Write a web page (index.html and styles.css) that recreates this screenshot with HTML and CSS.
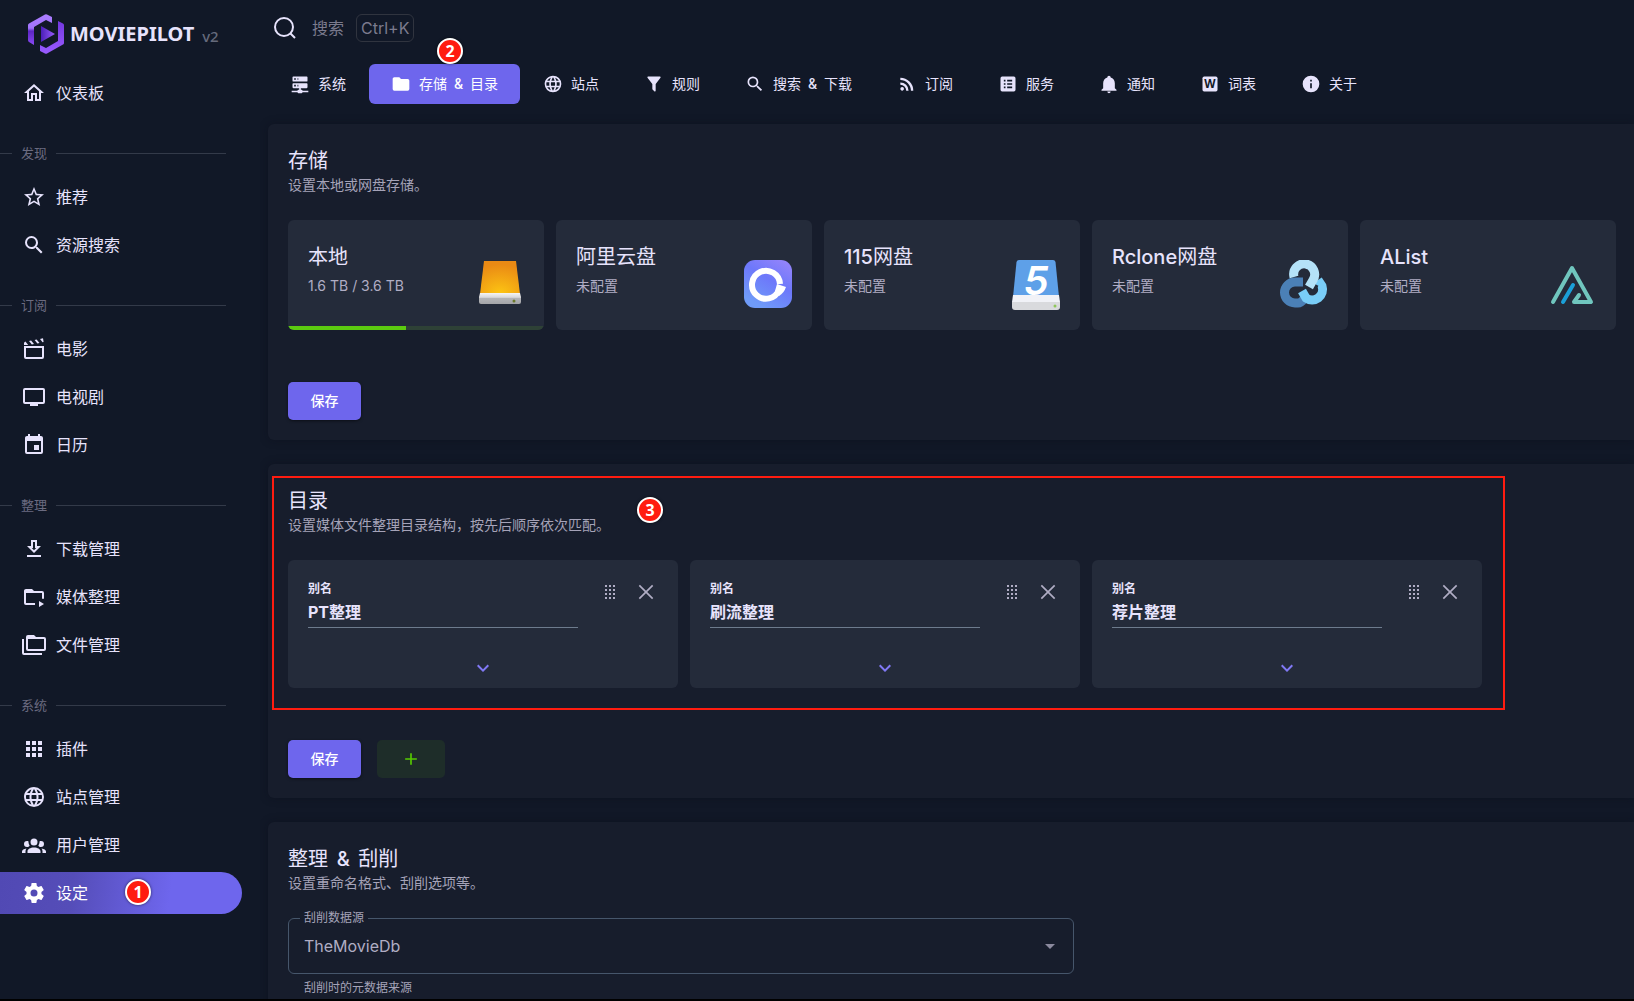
FILE: index.html
```html
<!DOCTYPE html>
<html lang="zh-CN">
<head>
  <meta charset="UTF-8">
  <meta name="viewport" content="width=device-width, initial-scale=1.0">
  <title>MoviePilot</title>
  <link rel="stylesheet" href="styles.css">
</head>
<body>
  <!-- icon sprite -->
  <svg class="sprite" aria-hidden="true">
    <symbol id="i-home" viewBox="0 0 24 24"><path d="M12 5.69L17 10.19V18H15V12H9V18H7V10.19L12 5.69M12 3L2 12H5V20H11V14H13V20H19V12H22"/></symbol>
    <symbol id="i-star" viewBox="0 0 24 24"><path d="M12,15.39L8.24,17.66L9.23,13.38L5.91,10.5L10.29,10.13L12,6.09L13.71,10.13L18.09,10.5L14.77,13.38L15.76,17.66M22,9.24L14.81,8.63L12,2L9.19,8.63L2,9.24L7.45,13.97L5.82,21L12,17.27L18.18,21L16.54,13.97L22,9.24Z"/></symbol>
    <symbol id="i-search" viewBox="0 0 24 24"><path d="M9.5,3A6.5,6.5 0 0,1 16,9.5C16,11.11 15.41,12.59 14.44,13.73L14.71,14H15.5L20.5,19L19,20.5L14,15.5V14.71L13.73,14.44C12.59,15.41 11.11,16 9.5,16A6.5,6.5 0 0,1 3,9.5A6.5,6.5 0 0,1 9.5,3M9.5,5C7,5 5,7 5,9.5C5,12 7,14 9.5,14C12,14 14,12 14,9.5C14,7 12,5 9.5,5Z"/></symbol>
    <symbol id="i-movie" viewBox="0 0 24 24"><path fill-rule="evenodd" d="M2 9H22V20A2 2 0 0 1 20 22H4A2 2 0 0 1 2 20V9M4 11V20H20V11H4Z"/><path d="M2 8V6.3A2 2 0 0 1 3.4 4.5L6.2 8ZM7 3.9L9.1 3.4L12 7L9.8 7.5ZM12.6 2.9L14.6 2.4L17.5 6L15.4 6.5ZM18 2L21 1.3L21.6 5L20.6 5.2Z"/></symbol>
    <symbol id="i-tv" viewBox="0 0 24 24"><path d="M21,17H3V5H21M21,3H3A2,2 0 0,0 1,5V17A2,2 0 0,0 3,19H8V21H16V19H21A2,2 0 0,0 23,17V5A2,2 0 0,0 21,3Z"/></symbol>
    <symbol id="i-calendar" viewBox="0 0 24 24"><path d="M19,19H5V8H19M16,1V3H8V1H6V3H5C3.89,3 3,3.89 3,5V19A2,2 0 0,0 5,21H19A2,2 0 0,0 21,19V5C21,3.89 20.1,3 19,3H18V1M17,12H12V17H17V12Z"/></symbol>
    <symbol id="i-download" viewBox="0 0 24 24"><path d="M13,5V11H14.17L12,13.17L9.83,11H11V5H13M15,3H9V9H5L12,16L19,9H15V3M19,18H5V20H19V18Z"/></symbol>
    <symbol id="i-folder-play" viewBox="0 0 24 24"><path d="M13 19C13 19.34 13.04 19.67 13.09 20H4A2 2 0 0 1 2 18V6C2 4.89 2.89 4 4 4H10L12 6H20A2 2 0 0 1 22 8V13.8H20V8H4V18H13.09C13.04 18.33 13 18.66 13 19M17 16V22L22 19Z"/></symbol>
    <symbol id="i-folders" viewBox="0 0 24 24"><path d="M22,4H14L12,2H6A2,2 0 0,0 4,4V16A2,2 0 0,0 6,18H22A2,2 0 0,0 24,16V6A2,2 0 0,0 22,4M2,6H0V20A2,2 0 0,0 2,22H20V20H2V6M6,6H22V16H6V6Z"/></symbol>
    <symbol id="i-apps" viewBox="0 0 24 24"><path d="M16,20H20V16H16M16,14H20V10H16M10,8H14V4H10M16,8H20V4H16M10,14H14V10H10M4,14H8V10H4M4,20H8V16H4M10,20H14V16H10M4,8H8V4H4V8Z"/></symbol>
    <symbol id="i-web" viewBox="0 0 24 24"><path d="M16.36,14C16.44,13.34 16.5,12.68 16.5,12C16.5,11.32 16.44,10.66 16.36,10H19.74C19.9,10.64 20,11.31 20,12C20,12.69 19.9,13.36 19.74,14M14.59,19.56C15.19,18.45 15.65,17.25 15.97,16H18.92C17.96,17.65 16.43,18.93 14.59,19.56M14.34,14H9.66C9.56,13.34 9.5,12.68 9.5,12C9.5,11.32 9.56,10.65 9.66,10H14.34C14.43,10.65 14.5,11.32 14.5,12C14.5,12.68 14.43,13.34 14.34,14M12,19.96C11.17,18.76 10.5,17.43 10.09,16H13.91C13.5,17.43 12.83,18.76 12,19.96M8,8H5.08C6.03,6.34 7.57,5.06 9.4,4.44C8.8,5.55 8.35,6.75 8,8M5.08,16H8C8.35,17.25 8.8,18.45 9.4,19.56C7.57,18.93 6.03,17.65 5.08,16M4.26,14C4.1,13.36 4,12.69 4,12C4,11.31 4.1,10.64 4.26,10H7.64C7.56,10.66 7.5,11.32 7.5,12C7.5,12.68 7.56,13.34 7.64,14M12,4.03C12.83,5.23 13.5,6.57 13.91,8H10.09C10.5,6.57 11.17,5.23 12,4.03M18.92,8H15.97C15.65,6.75 15.19,5.55 14.59,4.44C16.43,5.07 17.96,6.34 18.92,8M12,2C6.47,2 2,6.5 2,12A10,10 0 0,0 12,22A10,10 0 0,0 22,12A10,10 0 0,0 12,2Z"/></symbol>
    <symbol id="i-users" viewBox="0 0 24 24"><path d="M12,5.5A3.5,3.5 0 0,1 15.5,9A3.5,3.5 0 0,1 12,12.5A3.5,3.5 0 0,1 8.5,9A3.5,3.5 0 0,1 12,5.5M5,8C5.56,8 6.08,8.15 6.53,8.42C6.38,9.85 6.8,11.27 7.66,12.38C7.16,13.34 6.16,14 5,14A3,3 0 0,1 2,11A3,3 0 0,1 5,8M19,8A3,3 0 0,1 22,11A3,3 0 0,1 19,14C17.84,14 16.84,13.34 16.34,12.38C17.2,11.27 17.62,9.85 17.47,8.42C17.92,8.15 18.44,8 19,8M5.5,18.25C5.5,16.18 8.41,14.5 12,14.5C15.59,14.5 18.5,16.18 18.5,18.25V20H5.5V18.25M0,20V18.5C0,17.11 1.89,15.94 4.45,15.6C3.86,16.28 3.5,17.22 3.5,18.25V20H0M24,20H20.5V18.25C20.5,17.22 20.14,16.28 19.55,15.6C22.11,15.94 24,17.11 24,18.5V20Z"/></symbol>
    <symbol id="i-cog" viewBox="0 0 24 24"><path d="M12,15.5A3.5,3.5 0 0,1 8.5,12A3.5,3.5 0 0,1 12,8.5A3.5,3.5 0 0,1 15.5,12A3.5,3.5 0 0,1 12,15.5M19.43,12.97C19.47,12.65 19.5,12.33 19.5,12C19.5,11.67 19.47,11.34 19.43,11L21.54,9.37C21.73,9.22 21.78,8.95 21.66,8.73L19.66,5.27C19.54,5.05 19.27,4.96 19.05,5.05L16.56,6.05C16.04,5.66 15.5,5.32 14.87,5.07L14.5,2.42C14.46,2.18 14.25,2 14,2H10C9.75,2 9.54,2.18 9.5,2.42L9.13,5.07C8.5,5.32 7.96,5.66 7.44,6.05L4.95,5.05C4.73,4.96 4.46,5.05 4.34,5.27L2.34,8.73C2.21,8.95 2.27,9.22 2.46,9.37L4.57,11C4.53,11.34 4.5,11.67 4.5,12C4.5,12.33 4.53,12.65 4.57,12.97L2.46,14.63C2.27,14.78 2.21,15.05 2.34,15.27L4.34,18.73C4.46,18.95 4.73,19.03 4.95,18.95L7.44,17.94C7.96,18.34 8.5,18.68 9.13,18.93L9.5,21.58C9.54,21.82 9.75,22 10,22H14C14.25,22 14.46,21.82 14.5,21.58L14.87,18.93C15.5,18.67 16.04,18.34 16.56,17.94L19.05,18.95C19.27,19.03 19.54,18.95 19.66,18.73L21.66,15.27C21.78,15.05 21.73,14.78 21.54,14.63L19.43,12.97Z"/></symbol>
    <symbol id="i-server" viewBox="0 0 24 24"><path d="M13,19H14A1,1 0 0,1 15,20H22V22H15A1,1 0 0,1 14,23H10A1,1 0 0,1 9,22H2V20H9A1,1 0 0,1 10,19H11V17H4A1,1 0 0,1 3,16V12A1,1 0 0,1 4,11H20A1,1 0 0,1 21,12V16A1,1 0 0,1 20,17H13V19M4,3H20A1,1 0 0,1 21,4V8A1,1 0 0,1 20,9H4A1,1 0 0,1 3,8V4A1,1 0 0,1 4,3M9,7H10V5H9V7M9,15H10V13H9V15M5,5V7H7V5H5M5,13V15H7V13H5Z"/></symbol>
    <symbol id="i-folder" viewBox="0 0 24 24"><path d="M10,4H4C2.89,4 2,4.89 2,6V18A2,2 0 0,0 4,20H20A2,2 0 0,0 22,18V8C22,6.89 21.1,6 20,6H12L10,4Z"/></symbol>
    <symbol id="i-filter" viewBox="0 0 24 24"><path d="M14,12V19.88C14.04,20.18 13.94,20.5 13.71,20.71C13.32,21.1 12.69,21.1 12.3,20.71L10.29,18.7C10.06,18.47 9.96,18.16 10,17.87V12H9.97L4.21,4.62C3.87,4.19 3.95,3.56 4.38,3.22C4.57,3.08 4.78,3 5,3H19C19.22,3 19.43,3.08 19.62,3.22C20.05,3.56 20.13,4.19 19.79,4.62L14.03,12H14Z"/></symbol>
    <symbol id="i-rss" viewBox="0 0 24 24"><path d="M6.18,15.64A2.18,2.18 0 0,1 8.36,17.82C8.36,19 7.38,20 6.18,20C5,20 4,19 4,17.82A2.18,2.18 0 0,1 6.18,15.64M4,4.44A15.56,15.56 0 0,1 19.56,20H16.73A12.73,12.73 0 0,0 4,7.27V4.44M4,10.1A9.9,9.9 0 0,1 13.9,20H11.07A7.07,7.07 0 0,0 4,12.93V10.1Z"/></symbol>
    <symbol id="i-list" viewBox="0 0 24 24"><path fill-rule="evenodd" d="M5 3H19A2 2 0 0 1 21 5V19A2 2 0 0 1 19 21H5A2 2 0 0 1 3 19V5A2 2 0 0 1 5 3M7 7V9H9V7ZM11 7V9H17V7ZM7 11V13H9V11ZM11 11V13H17V11ZM7 15V17H9V15ZM11 15V17H17V15Z"/></symbol>
    <symbol id="i-bell" viewBox="0 0 24 24"><path d="M21,19V20H3V19L5,17V11C5,7.9 7.03,5.17 10,4.29C10,4.19 10,4.1 10,4A2,2 0 0,1 12,2A2,2 0 0,1 14,4C14,4.1 14,4.19 14,4.29C16.97,5.17 19,7.9 19,11V17L21,19M14,21A2,2 0 0,1 12,23A2,2 0 0,1 10,21"/></symbol>
    <symbol id="i-info" viewBox="0 0 24 24"><path d="M13,9H11V7H13M13,17H11V11H13M12,2A10,10 0 0,0 2,12A10,10 0 0,0 12,22A10,10 0 0,0 22,12A10,10 0 0,0 12,2Z"/></symbol>
    <symbol id="i-drag" viewBox="0 0 20 20"><path d="M5 3H7V5H5ZM9 3H11V5H9ZM13 3H15V5H13ZM5 7H7V9H5ZM9 7H11V9H9ZM13 7H15V9H13ZM5 11H7V13H5ZM9 11H11V13H9ZM13 11H15V13H13ZM5 15H7V17H5ZM9 15H11V17H9ZM13 15H15V17H13Z"/></symbol>
    <symbol id="i-close" viewBox="0 0 24 24"><path d="M4 4L20 20M20 4L4 20" fill="none" stroke="currentColor" stroke-width="2"/></symbol>
    <symbol id="i-chevron" viewBox="0 0 24 24"><path d="M7.41,8.58L12,13.17L16.59,8.58L18,10L12,16L6,10L7.41,8.58Z"/></symbol>
    <symbol id="i-plus" viewBox="0 0 24 24"><path d="M19,13H13V19H11V13H5V11H11V5H13V11H19V13Z"/></symbol>
  </svg>

  <div class="layout">
    <aside class="sidebar">
      <a class="brand" href="#">
        <svg class="brand-logo" viewBox="0 0 36 40" aria-hidden="true">
          <defs>
            <linearGradient id="lg1" x1="0" y1="0" x2="0" y2="1"><stop offset="0" stop-color="#ab7dff"/><stop offset="0.450" stop-color="#a274fb"/><stop offset="0.550" stop-color="#5c25c4"/><stop offset="1" stop-color="#8a4af5"/></linearGradient>
            <linearGradient id="lg2" x1="0" y1="0" x2="0" y2="1"><stop offset="0" stop-color="#7337e0"/><stop offset="1" stop-color="#9a5cff"/></linearGradient>
            <linearGradient id="lg3" x1="0" y1="0" x2="1" y2="0"><stop offset="0" stop-color="#4a1fb8"/><stop offset="1" stop-color="#9a5cff"/></linearGradient>
          </defs>
          <path fill="url(#lg1)" d="M0 11Q0 10 1 9.400L17 0.400Q18 0 19 0.400L24 3V9L18 6L6 13V31L1 28Q0 27.500 0 26Z"/>
          <path fill="url(#lg2)" d="M30 7L35 9.500Q36 10 36 11V29Q36 30 35 30.500L19 39.600Q18 40 17 39.600L12 37V31L18 34L30 27Z"/>
          <path fill="url(#lg3)" d="M13 12L27 20L13 28Z"/>
        </svg>
        <span class="brand-name">MOVIEPILOT</span>
        <span class="brand-version">v2</span>
      </a>
      <nav class="nav">
        <a class="nav-link" href="#"><svg class="icon"><use href="#i-home"/></svg>仪表板</a>
        <div class="nav-title">发现</div>
        <a class="nav-link" href="#"><svg class="icon"><use href="#i-star"/></svg>推荐</a>
        <a class="nav-link" href="#"><svg class="icon"><use href="#i-search"/></svg>资源搜索</a>
        <div class="nav-title">订阅</div>
        <a class="nav-link" href="#"><svg class="icon"><use href="#i-movie"/></svg>电影</a>
        <a class="nav-link" href="#"><svg class="icon"><use href="#i-tv"/></svg>电视剧</a>
        <a class="nav-link" href="#"><svg class="icon"><use href="#i-calendar"/></svg>日历</a>
        <div class="nav-title">整理</div>
        <a class="nav-link" href="#"><svg class="icon"><use href="#i-download"/></svg>下载管理</a>
        <a class="nav-link" href="#"><svg class="icon"><use href="#i-folder-play"/></svg>媒体整理</a>
        <a class="nav-link" href="#"><svg class="icon"><use href="#i-folders"/></svg>文件管理</a>
        <div class="nav-title">系统</div>
        <a class="nav-link" href="#"><svg class="icon"><use href="#i-apps"/></svg>插件</a>
        <a class="nav-link" href="#"><svg class="icon"><use href="#i-web"/></svg>站点管理</a>
        <a class="nav-link" href="#"><svg class="icon"><use href="#i-users"/></svg>用户管理</a>
        <a class="nav-link active" href="#"><svg class="icon"><use href="#i-cog"/></svg>设定<span class="step step-nav">1</span></a>
      </nav>
    </aside>

    <main class="main">
      <header class="topbar">
        <button class="search-btn" type="button">
          <svg class="icon" viewBox="0 0 24 24" fill="none" stroke="currentColor" stroke-width="2"><circle cx="11" cy="11" r="9"/><path d="M17.500 17.500L22 22"/></svg>
          <span>搜索</span>
          <kbd>Ctrl+K</kbd>
        </button>
      </header>

      <nav class="tabs">
        <button class="tab" type="button"><svg class="icon"><use href="#i-server"/></svg>系统</button>
        <button class="tab active" type="button"><svg class="icon"><use href="#i-folder"/></svg><span>存储 <span class="amp">&amp;</span> 目录</span><span class="step step-tab">2</span></button>
        <button class="tab" type="button"><svg class="icon"><use href="#i-web"/></svg>站点</button>
        <button class="tab" type="button"><svg class="icon"><use href="#i-filter"/></svg>规则</button>
        <button class="tab" type="button"><svg class="icon"><use href="#i-search"/></svg><span>搜索 <span class="amp">&amp;</span> 下载</span></button>
        <button class="tab" type="button"><svg class="icon"><use href="#i-rss"/></svg>订阅</button>
        <button class="tab" type="button"><svg class="icon"><use href="#i-list"/></svg>服务</button>
        <button class="tab" type="button"><svg class="icon"><use href="#i-bell"/></svg>通知</button>
        <button class="tab" type="button"><svg class="icon" viewBox="0 0 24 24"><rect x="3" y="3" width="18" height="18" rx="2"/><text x="12" y="17" text-anchor="middle" class="word-mark">W</text></svg>词表</button>
        <button class="tab" type="button"><svg class="icon"><use href="#i-info"/></svg>关于</button>
      </nav>

      <section class="card">
        <h2>存储</h2>
        <p class="subtitle">设置本地或网盘存储。</p>
        <div class="storage-grid">
          <div class="storage">
            <div>
              <h3>本地</h3>
              <p>1.6 TB / 3.6 TB</p>
            </div>
            <svg class="storage-icon" viewBox="0 0 48 48" aria-hidden="true">
              <defs>
                <radialGradient id="orange" cx="0.5" cy="1" r="0.9"><stop offset="0" stop-color="#fdc613"/><stop offset="1" stop-color="#ea8a14"/></radialGradient>
                <linearGradient id="steel" x1="0" y1="0" x2="0" y2="1"><stop offset="0" stop-color="#f4f4f4"/><stop offset="0.400" stop-color="#d8d8da"/><stop offset="0.450" stop-color="#b4b5b8"/><stop offset="1" stop-color="#a4a5a8"/></linearGradient>
              </defs>
              <path fill="url(#orange)" d="M8 1H40L44 34H4Z"/>
              <path fill="url(#steel)" d="M4 33H44L45 37V42Q45 44 43 44H5Q3 44 3 42V37Z"/>
              <circle cx="38" cy="41" r="1.500" fill="#6c7a2c"/>
            </svg>
            <div class="usage"><div class="usage-bar" style="width: 46%"></div></div>
          </div>
          <div class="storage">
            <div>
              <h3>阿里云盘</h3>
              <p>未配置</p>
            </div>
            <svg class="storage-icon" viewBox="0 0 48 48" aria-hidden="true">
              <defs>
                <linearGradient id="ali" x1="1" y1="0" x2="0.4" y2="1"><stop offset="0" stop-color="#9a86fb"/><stop offset="0.500" stop-color="#6d78fa"/><stop offset="1" stop-color="#6f9bf8"/></linearGradient>
              </defs>
              <rect width="48" height="48" rx="11" fill="url(#ali)"/>
              <path d="M35 30A14 14 0 1 1 36 24" fill="none" stroke="#fff" stroke-width="6"/>
              <path d="M33 24L42 27Q40 33 35 36L31 31Z" fill="#fff"/>
            </svg>
          </div>
          <div class="storage">
            <div>
              <h3><span class="latin">115</span>网盘</h3>
              <p>未配置</p>
            </div>
            <svg class="storage-icon tall" viewBox="0 0 48 50" aria-hidden="true">
              <path fill="#5ea0e8" d="M7 0H41Q43 0 43.500 2L47 37H1L4.500 2Q5 0 7 0Z"/>
              <text x="24" y="35" text-anchor="middle" class="disk-mark">5</text>
              <path fill="#f1f2f7" d="M1 35H47L48 42H0Z"/>
              <path fill="#d9dadd" d="M0 42H48V47Q48 50 45 50H3Q0 50 0 47Z"/>
              <circle cx="43" cy="46" r="1.500" fill="#8fc75a"/>
            </svg>
          </div>
          <div class="storage">
            <div>
              <h3><span class="latin">Rclone</span>网盘</h3>
              <p>未配置</p>
            </div>
            <svg class="storage-icon" viewBox="0 0 48 48" aria-hidden="true" fill="none" stroke-width="9">
              <path stroke="#4b80b6" d="M23 22H15A10.500 10.500 0 0 0 15 43H18Q21 43 24 39"/>
              <path stroke="#79cdf7" d="M22 31L26 38A10.500 10.500 0 0 0 42 26L38 20"/>
              <path stroke="#242b3a" stroke-width="12" d="M33 23L30 29"/>
              <path stroke="#b4e2f8" d="M14 17A10.500 10.500 0 1 1 33 20L29 27"/>
            </svg>
          </div>
          <div class="storage">
            <div>
              <h3><span class="latin">AList</span></h3>
              <p>未配置</p>
            </div>
            <svg class="storage-icon" viewBox="0 0 48 48" aria-hidden="true" fill="none" stroke-width="4" stroke-linecap="round" stroke-linejoin="round">
              <path stroke="#70c6be" d="M5 42L24 8L43 42H26L31 35"/>
              <path stroke="#1ba0d8" d="M15 42L25 25"/>
            </svg>
          </div>
        </div>
        <div class="actions">
          <button class="btn" type="button">保存</button>
        </div>
      </section>

      <section class="card directory">
        <h2>目录</h2>
        <p class="subtitle">设置媒体文件整理目录结构，按先后顺序依次匹配。</p>
        <div class="directory-grid">
          <div class="dir">
            <div class="dir-head">
              <div class="field">
                <label for="alias1">别名</label>
                <input id="alias1" type="text" value="PT整理">
              </div>
              <button class="icon-btn" type="button" aria-label="拖动"><svg class="icon"><use href="#i-drag"/></svg></button>
              <button class="icon-btn" type="button" aria-label="关闭"><svg class="icon"><use href="#i-close"/></svg></button>
            </div>
            <button class="expand" type="button" aria-label="展开"><svg class="icon"><use href="#i-chevron"/></svg></button>
          </div>
          <div class="dir">
            <div class="dir-head">
              <div class="field">
                <label for="alias2">别名</label>
                <input id="alias2" type="text" value="刷流整理">
              </div>
              <button class="icon-btn" type="button" aria-label="拖动"><svg class="icon"><use href="#i-drag"/></svg></button>
              <button class="icon-btn" type="button" aria-label="关闭"><svg class="icon"><use href="#i-close"/></svg></button>
            </div>
            <button class="expand" type="button" aria-label="展开"><svg class="icon"><use href="#i-chevron"/></svg></button>
          </div>
          <div class="dir">
            <div class="dir-head">
              <div class="field">
                <label for="alias3">别名</label>
                <input id="alias3" type="text" value="荐片整理">
              </div>
              <button class="icon-btn" type="button" aria-label="拖动"><svg class="icon"><use href="#i-drag"/></svg></button>
              <button class="icon-btn" type="button" aria-label="关闭"><svg class="icon"><use href="#i-close"/></svg></button>
            </div>
            <button class="expand" type="button" aria-label="展开"><svg class="icon"><use href="#i-chevron"/></svg></button>
          </div>
        </div>
        <div class="actions">
          <button class="btn" type="button">保存</button>
          <button class="btn btn-add" type="button" aria-label="添加"><svg class="icon"><use href="#i-plus"/></svg></button>
        </div>
        <!-- guide marks drawn over the section -->
        <div class="highlight"></div>
        <span class="step step-section">3</span>
      </section>

      <section class="card">
        <h2>整理 <span class="amp">&amp;</span> 刮削</h2>
        <p class="subtitle">设置重命名格式、刮削选项等。</p>
        <div class="select-wrap">
          <fieldset class="select-field">
            <legend><label for="source">刮削数据源</label></legend>
            <select id="source">
              <option>TheMovieDb</option>
            </select>
          </fieldset>
          <p class="hint">刮削时的元数据来源</p>
        </div>
      </section>
    </main>
  </div>
</body>
</html>
```
FILE: styles.css
```css
* {
  box-sizing: border-box;
}

body {
  margin: 0;
  background: #111827;
  color: #e7e3fc;
  font-family: Inter, "Noto Sans CJK SC", sans-serif;
  font-size: 16px;
  line-height: 24px;
}

h2, h3, p {
  margin: 0;
}

a {
  color: inherit;
  text-decoration: none;
}

button, input, select {
  font: inherit;
  color: inherit;
  background: none;
  border: none;
  padding: 0;
}

button {
  cursor: pointer;
}

.sprite {
  display: none;
}

.icon {
  width: 24px;
  height: 24px;
  fill: currentColor;
  flex-shrink: 0;
}

.layout {
  display: flex;
  height: 100vh;
  overflow: hidden;
  border-bottom: 2px solid #000;
}

/* sidebar */
.sidebar {
  width: 260px;
  flex-shrink: 0;
}

.brand {
  display: flex;
  align-items: center;
  height: 68px;
  padding-left: 28px;
}

.brand-logo {
  width: 36px;
  height: 40px;
  margin-right: 6px;
}

.brand-name {
  font-family: "Noto Sans", sans-serif;
  font-size: 20px;
  font-weight: 700;
}

.brand-version {
  margin: 4px 0 0 8px;
  font-family: "Noto Sans", sans-serif;
  font-size: 15px;
  font-weight: 500;
  color: #656a7b;
}

.nav {
  display: flex;
  flex-direction: column;
  padding: 4px 18px 0 0;
}

.nav-link {
  position: relative;
  display: flex;
  align-items: center;
  gap: 10px;
  height: 42px;
  margin-bottom: 6px;
  padding-left: 22px;
  border-radius: 0 21px 21px 0;
}

.nav-link.active {
  background: linear-gradient(98deg, #5149b4, #554db8 30%, #6e66ed 70%);
  color: #fff;
}

.nav-title {
  display: flex;
  align-items: center;
  gap: 9px;
  height: 56px;
  padding: 20px 16px 10px 0;
  font-size: 13px;
  color: #6b6b80;
}

.nav-title::before,
.nav-title::after {
  content: "";
  height: 1px;
  background: #333a49;
}

.nav-title::before {
  width: 12px;
}

.nav-title::after {
  flex: 1;
}

/* numbered guide badges */
.step {
  position: absolute;
  display: flex;
  align-items: center;
  justify-content: center;
  width: 26px;
  height: 26px;
  border: 2px solid #fff;
  border-radius: 50%;
  background: #ff1c10;
  box-shadow: 0 0 3px rgba(0, 0, 0, 0.6);
  color: #fff;
  font-family: "Noto Sans", sans-serif;
  font-size: 16px;
  font-weight: 700;
  line-height: 20px;
}

.step-nav {
  left: 125px;
  top: 7px;
}

.step-tab {
  left: 68px;
  top: -26px;
}

.step-section {
  left: 369px;
  top: 33px;
}

/* main area */
.main {
  flex: 1;
  min-width: 0;
  padding-left: 8px;
  overflow: hidden;
}

.topbar {
  display: flex;
  align-items: center;
  height: 56px;
}

.search-btn {
  display: flex;
  align-items: center;
  margin-left: 5px;
  color: #7b7b8e;
}

.search-btn .icon {
  margin-right: 15px;
  fill: none;
  color: #e7e3fc;
}

kbd {
  margin-left: 12px;
  padding: 1px 4px;
  border: 1px solid #30343f;
  border-radius: 6px;
  font: inherit;
}

.tabs {
  display: flex;
  gap: 1px;
  padding-top: 8px;
  margin-bottom: 20px;
}

.tab {
  position: relative;
  display: flex;
  align-items: center;
  gap: 8px;
  height: 40px;
  padding: 0 22px;
  border-radius: 6px;
  font-size: 14px;
  white-space: nowrap;
}

.tab .icon {
  width: 20px;
  height: 20px;
}

.tab.active {
  background: #6e66ed;
  color: #fff;
}

.amp {
  margin: 0 3px;
  font-weight: 500;
}

.word-mark {
  fill: #111827;
  font-family: "Noto Sans", sans-serif;
  font-size: 14px;
  font-weight: 700;
}

.card {
  position: relative;
  margin-bottom: 24px;
  padding: 22px 18px 20px 20px;
  border-radius: 6px 0 0 6px;
  background: #171d2c;
  box-shadow: 0 0 8px rgba(9, 12, 24, 0.4);
}

h2 {
  font-size: 20px;
  font-weight: 400;
  line-height: 30px;
}

.subtitle {
  font-size: 14px;
  line-height: 18px;
  color: #a5a3b8;
}

.storage-grid {
  display: grid;
  grid-template-columns: repeat(5, 1fr);
  gap: 12px;
  margin-top: 26px;
}

.storage {
  position: relative;
  display: flex;
  justify-content: space-between;
  height: 110px;
  padding: 20px;
  border-radius: 6px;
  background: #242b3a;
  overflow: hidden;
}

.storage h3 {
  font-size: 20px;
  font-weight: 400;
  line-height: 34px;
}

.latin {
  font-weight: 500;
}

.storage p {
  font-size: 14px;
  line-height: 24px;
  color: #b0adc4;
}

.storage-icon {
  width: 48px;
  height: 48px;
  margin-top: 20px;
}

.storage-icon.tall {
  height: 50px;
  overflow: visible;
}

.disk-mark {
  fill: #fff;
  font-family: Inter, sans-serif;
  font-size: 40px;
  font-style: italic;
  font-weight: 600;
}

.usage {
  position: absolute;
  left: 0;
  right: 0;
  bottom: 0;
  height: 4px;
  background: #2e4136;
}

.usage-bar {
  height: 4px;
  background: #5ccb10;
}

.actions {
  display: flex;
  gap: 16px;
  margin-top: 52px;
}

.btn {
  min-width: 73px;
  height: 38px;
  padding: 0 22px;
  border-radius: 5px;
  background: #6e66ed;
  box-shadow: 0 1px 3px rgba(0, 0, 0, 0.5);
  color: #fff;
  font-size: 14px;
  font-weight: 500;
}

.btn-add {
  display: flex;
  align-items: center;
  min-width: 0;
  background: #1e2d29;
  box-shadow: none;
  color: #56ca00;
}

.btn-add .icon {
  height: 20px;
}

/* directories */
.directory-grid {
  display: grid;
  grid-template-columns: repeat(auto-fill, 390px);
  gap: 12px;
  margin-top: 26px;
}

.dir {
  height: 128px;
  padding: 20px;
  border-radius: 6px;
  background: #242b3a;
}

.dir-head {
  display: flex;
  align-items: flex-start;
  gap: 12px;
}

.field {
  flex: 1;
  display: flex;
  flex-direction: column;
  margin-right: 8px;
  border-bottom: 1px solid #6d7b8d;
}

.field label {
  font-size: 12px;
  font-weight: 700;
  line-height: 18px;
}

.field input {
  width: 100%;
  height: 29px;
  padding-bottom: 4px;
  font-weight: 700;
}

.icon-btn {
  display: flex;
  justify-content: center;
  width: 24px;
  padding-top: 2px;
  color: #b0adc4;
}

.icon-btn .icon {
  width: 20px;
  height: 20px;
}

.expand {
  display: flex;
  justify-content: center;
  width: 100%;
  padding-top: 28px;
  color: #8179f5;
}

.highlight {
  position: absolute;
  left: 4px;
  top: 12px;
  width: 1233px;
  height: 234px;
  border: 2px solid #ff1c10;
  pointer-events: none;
}

/* scraping source */
.select-wrap {
  max-width: 786px;
  margin-top: 17px;
}

.select-field {
  margin: 0;
  padding: 0 15px;
  border: 1px solid #46566b;
  border-radius: 6px;
}

.select-field legend {
  margin-left: -4px;
  padding: 0 4px;
  font-size: 12px;
  line-height: 18px;
  color: #a5a3b8;
}

.select-field select {
  display: block;
  width: 100%;
  height: 46px;
  padding-bottom: 8px;
  appearance: none;
  color: #b0adc4;
  background: url("data:image/svg+xml,%3Csvg xmlns='http://www.w3.org/2000/svg' width='10' height='5'%3E%3Cpath fill='%238b8a9e' d='M0 0h10L5 5z'/%3E%3C/svg%3E") no-repeat right 3px top 17px;
}

.hint {
  padding: 5px 16px;
  font-size: 12px;
  line-height: 18px;
  color: #a5a3b8;
}
```
